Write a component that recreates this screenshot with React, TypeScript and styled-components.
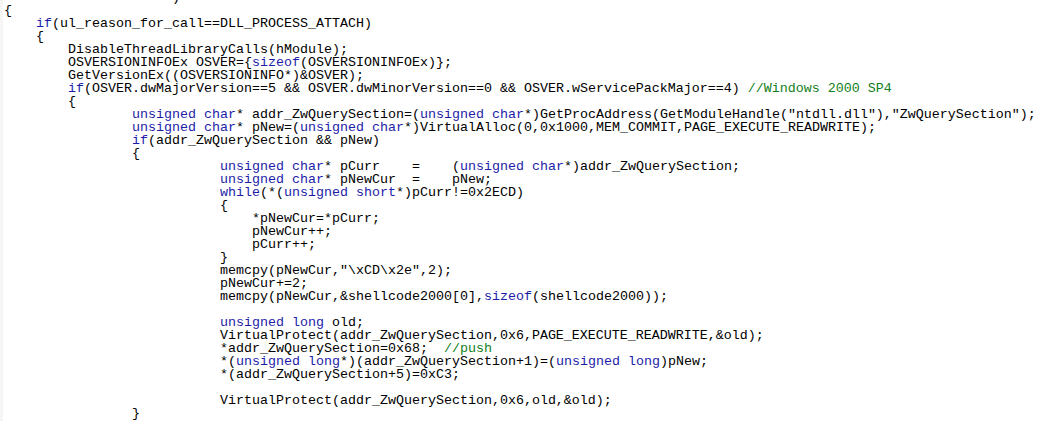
import React from "react";
import styled, { createGlobalStyle } from "styled-components";

const GlobalStyle = createGlobalStyle`
  html, body {
    margin: 0;
    padding: 0;
    background: #ffffff;
    overflow: hidden;
  }
  body {
    width: 1058px;
    height: 421px;
  }
`;

const Editor = styled.div`
  display: flex;
  width: 1058px;
  height: 421px;
  overflow: hidden;
  background: #ffffff;
`;

const Gutter = styled.div`
  flex: 0 0 3px;
  background: repeating-linear-gradient(
    to bottom,
    #f1f1f1 0px,
    #f1f1f1 1px,
    #fafafa 1px,
    #fafafa 2px
  );
`;

const Code = styled.pre`
  margin: -9px 0 0 1px;
  padding: 0;
  font-family: "Liberation Mono", "Courier New", monospace;
  font-size: 13.333px;
  line-height: 13px;
  color: #000000;
  white-space: pre;
`;

const Line = styled.div`
  height: 13px;
`;

const Token = styled.span<{ $kind: "kw" | "comment" | "plain" }>`
  color: ${(p) =>
    p.$kind === "kw" ? "#1c1ca8" : p.$kind === "comment" ? "#12801a" : "#000000"};
`;

const KEYWORDS = new Set(["if", "unsigned", "char", "short", "long", "while", "sizeof"]);

const sp = (n: number) => " ".repeat(n);

const LINES: string[] = [
  sp(21) + ")",
  "{",
  sp(4) + "if(ul_reason_for_call==DLL_PROCESS_ATTACH)",
  sp(4) + "{",
  sp(8) + "DisableThreadLibraryCalls(hModule);",
  sp(8) + "OSVERSIONINFOEx OSVER={sizeof(OSVERSIONINFOEx)};",
  sp(8) + "GetVersionEx((OSVERSIONINFO*)&OSVER);",
  sp(8) +
    "if(OSVER.dwMajorVersion==5 && OSVER.dwMinorVersion==0 && OSVER.wServicePackMajor==4) //Windows 2000 SP4",
  sp(8) + "{",
  sp(16) +
    'unsigned char* addr_ZwQuerySection=(unsigned char*)GetProcAddress(GetModuleHandle("ntdll.dll"),"ZwQuerySection");',
  sp(16) + "unsigned char* pNew=(unsigned char*)VirtualAlloc(0,0x1000,MEM_COMMIT,PAGE_EXECUTE_READWRITE);",
  sp(16) + "if(addr_ZwQuerySection && pNew)",
  sp(16) + "{",
  sp(27) + "unsigned char* pCurr    =    (unsigned char*)addr_ZwQuerySection;",
  sp(27) + "unsigned char* pNewCur  =    pNew;",
  sp(27) + "while(*(unsigned short*)pCurr!=0x2ECD)",
  sp(27) + "{",
  sp(31) + "*pNewCur=*pCurr;",
  sp(31) + "pNewCur++;",
  sp(31) + "pCurr++;",
  sp(27) + "}",
  sp(27) + 'memcpy(pNewCur,"\\xCD\\x2e",2);',
  sp(27) + "pNewCur+=2;",
  sp(27) + "memcpy(pNewCur,&shellcode2000[0],sizeof(shellcode2000));",
  "",
  sp(27) + "unsigned long old;",
  sp(27) + "VirtualProtect(addr_ZwQuerySection,0x6,PAGE_EXECUTE_READWRITE,&old);",
  sp(27) + "*addr_ZwQuerySection=0x68;  //push",
  sp(27) + "*(unsigned long*)(addr_ZwQuerySection+1)=(unsigned long)pNew;",
  sp(27) + "*(addr_ZwQuerySection+5)=0xC3;",
  "",
  sp(27) + "VirtualProtect(addr_ZwQuerySection,0x6,old,&old);",
  sp(16) + "}",
];

type Tok = { kind: "kw" | "comment" | "plain"; text: string };

function tokenize(line: string): Tok[] {
  const out: Tok[] = [];
  let code = line;
  let comment = "";
  const ci = line.indexOf("//");
  if (ci >= 0) {
    code = line.slice(0, ci);
    comment = line.slice(ci);
  }
  const re = /[A-Za-z_][A-Za-z0-9_]*/g;
  let last = 0;
  let m: RegExpExecArray | null;
  let plain = "";
  while ((m = re.exec(code))) {
    plain += code.slice(last, m.index);
    if (KEYWORDS.has(m[0])) {
      if (plain) out.push({ kind: "plain", text: plain });
      plain = "";
      out.push({ kind: "kw", text: m[0] });
    } else {
      plain += m[0];
    }
    last = m.index + m[0].length;
  }
  plain += code.slice(last);
  if (plain) out.push({ kind: "plain", text: plain });
  if (comment) out.push({ kind: "comment", text: comment });
  return out;
}

export default function App() {
  return (
    <>
      <GlobalStyle />
      <Editor>
        <Gutter />
        <Code>
          {LINES.map((line, i) => (
            <Line key={i}>
              {line === ""
                ? " "
                : tokenize(line).map((t, j) => (
                    <Token key={j} $kind={t.kind}>
                      {t.text}
                    </Token>
                  ))}
            </Line>
          ))}
        </Code>
      </Editor>
    </>
  );
}
